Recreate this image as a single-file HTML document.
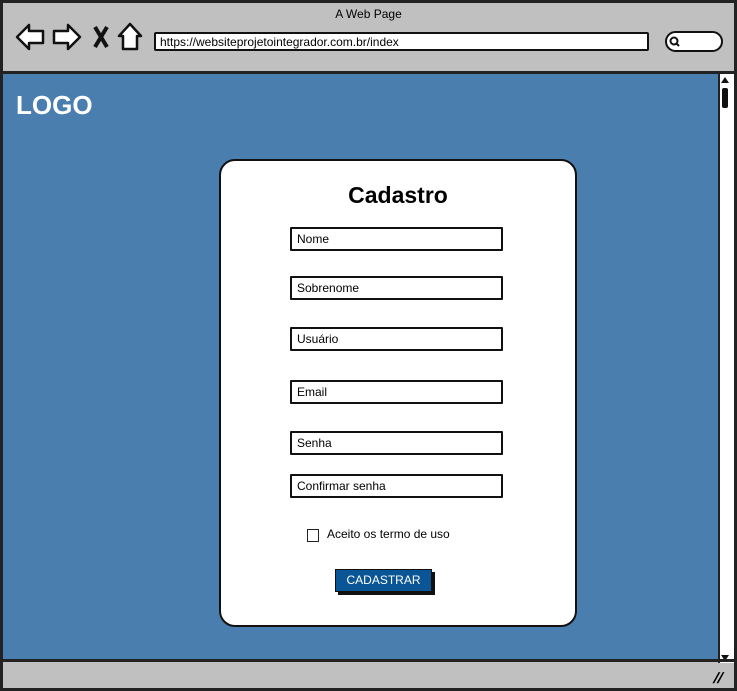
<!DOCTYPE html><html><head><style>
*{margin:0;padding:0;box-sizing:border-box}
body{width:737px;height:691px;position:relative;overflow:hidden;background:#fff;font-family:"Liberation Sans",sans-serif}
.a{position:absolute}
.inp{position:absolute;left:290px;width:213px;height:24px;border:2px solid #111;background:#fff;font-size:12px;padding:3px 0 0 5px;border-radius:1px}
</style></head><body>
<div class="a" style="left:0;top:0;width:737px;height:691px;border:3px solid #222;background:#c0c0c0"></div>
<div class="a" style="left:0;top:7px;width:737px;text-align:center;font-size:12px">A Web Page</div>
<svg class="a" style="left:14px;top:22px" width="130" height="30" viewBox="0 0 130 30">
<path d="M3 15 L15 3 L15 9 L29 9 L29 21 L15 21 L15 27 Z" fill="#fff" stroke="#111" stroke-width="2.5" stroke-linejoin="round"/>
<path d="M66 15 L54 3 L54 9 L40 9 L40 21 L54 21 L54 27 Z" fill="#fff" stroke="#111" stroke-width="2.5" stroke-linejoin="round"/>
<path d="M81 5 L93 25 M93 5 L81 25" stroke="#111" stroke-width="4"/>
<path d="M116 2 L105 14 L109 14 L109 27 L123 27 L123 14 L127 14 Z" fill="#fff" stroke="#111" stroke-width="2.5" stroke-linejoin="round"/>
</svg>
<div class="a" style="left:154px;top:32px;width:495px;height:19px;border:2px solid #111;background:#fff;font-size:12px;padding:1px 0 0 4px;border-radius:2px">https://websiteprojetointegrador.com.br/index</div>
<div class="a" style="left:665px;top:31px;width:58px;height:21px;border:2px solid #111;background:#fff;border-radius:11px"></div>
<svg class="a" style="left:668px;top:35px" width="14" height="14"><circle cx="6" cy="6" r="3.5" fill="none" stroke="#111" stroke-width="2"/><path d="M8 8 L11 11" stroke="#111" stroke-width="2"/></svg>
<div class="a" style="left:2px;top:71px;width:733px;height:3px;background:#222"></div>
<div class="a" style="left:3px;top:74px;width:715px;height:585px;background:#4a7eae"></div>
<div class="a" style="left:718px;top:74px;width:16px;height:589px;background:#fff;border-left:2px solid #222"></div>
<div class="a" style="left:722px;top:88px;width:6px;height:20px;background:#111;border-radius:2px"></div>
<div class="a" style="left:721px;top:77px;width:0;height:0;border:4px solid transparent;border-bottom:6px solid #111;border-top:0"></div>
<div class="a" style="left:721px;top:655px;width:0;height:0;border:4px solid transparent;border-top:6px solid #111;border-bottom:0"></div>
<div class="a" style="left:2px;top:659px;width:733px;height:3px;background:#222"></div>
<div class="a" style="left:714px;top:670px;font-size:15px;font-weight:bold;transform:skewX(-20deg)">//</div>
<div class="a" style="left:16px;top:90px;color:#fff;font-size:26px;font-weight:bold">LOGO</div>
<div class="a" style="left:219px;top:159px;width:358px;height:468px;background:#fff;border:2px solid #111;border-radius:16px"></div>
<div class="a" style="left:219px;top:182px;width:358px;text-align:center;font-size:23px;font-weight:bold">Cadastro</div>
<div class="inp" style="top:227px">Nome</div>
<div class="inp" style="top:276px">Sobrenome</div>
<div class="inp" style="top:327px">Usuário</div>
<div class="inp" style="top:380px">Email</div>
<div class="inp" style="top:431px">Senha</div>
<div class="inp" style="top:474px">Confirmar senha</div>
<div class="a" style="left:307px;top:529px;width:12px;height:13px;border:1.5px solid #222"></div>
<div class="a" style="left:327px;top:527px;font-size:12px">Aceito os termo de uso</div>
<div class="a" style="left:338px;top:572px;width:97px;height:23px;background:#111"></div>
<div class="a" style="left:335px;top:569px;width:97px;height:23px;background:#0a5596;border:1.5px solid #111;color:#fff;font-size:12px;text-align:center;line-height:20px">CADASTRAR</div>
</body></html>
